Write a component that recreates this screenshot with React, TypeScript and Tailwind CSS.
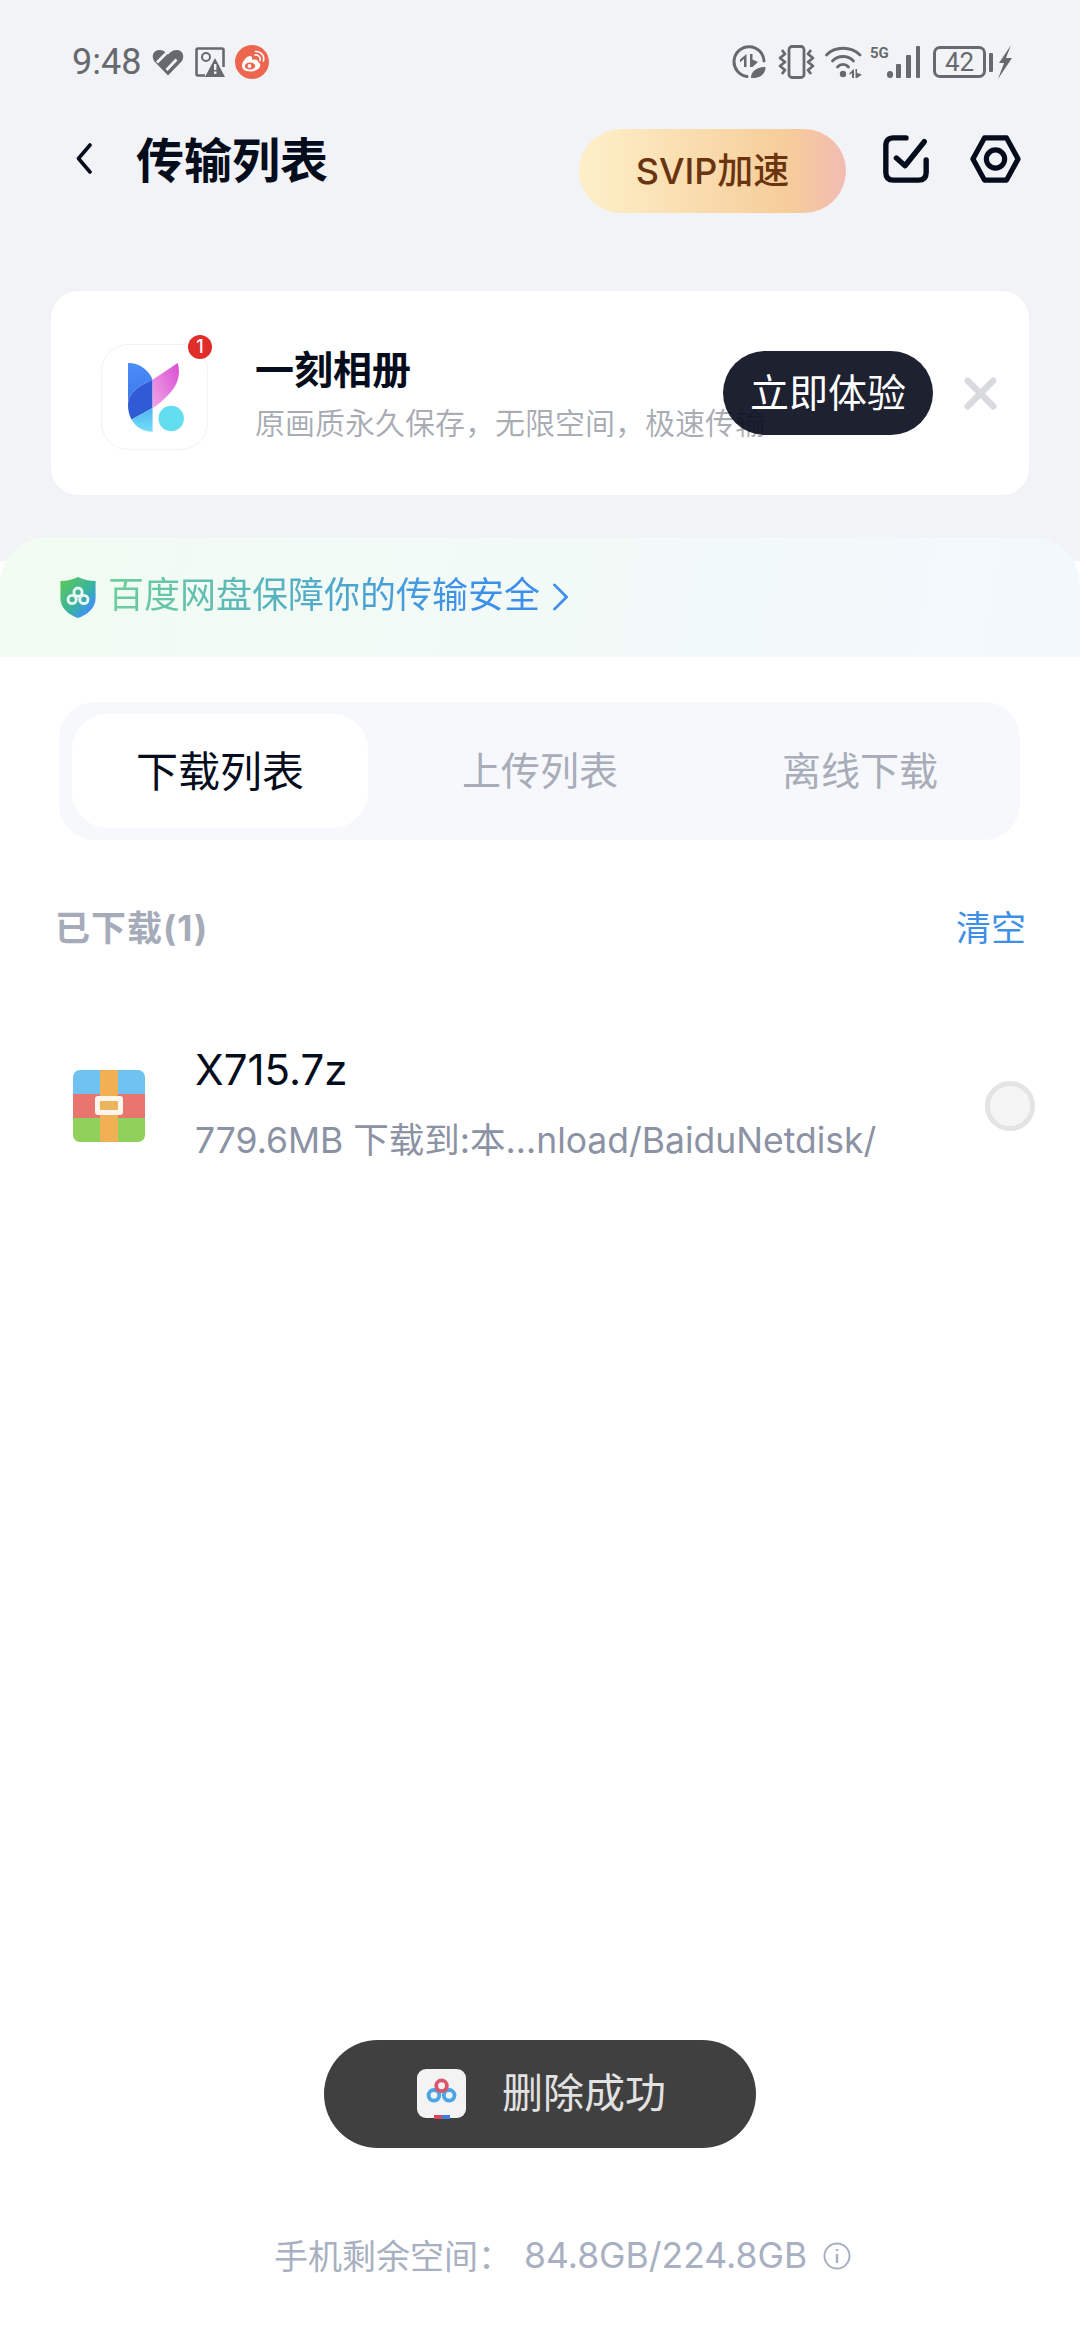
import React from 'react';

const IC = '#666a6e';

function HeartIcon() {
  return (
    <svg width="32" height="27" viewBox="0 0 32 27" fill={IC}>
      <path d="M16 26.5 L2.5 12.5 C-1 8 1 1 7.5 1 C11 1 13.5 3 16 5.5 C18.5 3 21 1 25 1 C31 1 33 8 29.5 12.5 Z" />
      <path d="M5 13.5 L16.5 2 M14.5 21 L24.5 10.5" stroke="#f2f3f7" strokeWidth="2.8" fill="none" />
    </svg>
  );
}

function PhotoAlertIcon() {
  return (
    <svg width="30" height="30" viewBox="0 0 30 30" fill="none">
      <path d="M10 28.5 H3 Q1.5 28.5 1.5 27 V3 Q1.5 1.5 3 1.5 H27 Q28.5 1.5 28.5 3 V20" stroke={IC} strokeWidth="2.6" />
      <circle cx="11" cy="10" r="4" stroke={IC} strokeWidth="2" />
      <path d="M20 11 L30 30 H10 Z" fill={IC} />
      <rect x="19" y="17" width="2.4" height="6" fill="#f2f3f7" />
      <rect x="19" y="24.5" width="2.4" height="2.4" fill="#f2f3f7" />
    </svg>
  );
}

function WeiboIcon() {
  return (
    <svg width="34" height="34" viewBox="0 0 34 34">
      <circle cx="17" cy="17" r="17" fill="#ec6650" />
      <path d="M7 21 C7 16 12 11 15 11 C17 11 17.5 13 17 15 C20 14 23 14.5 23 17 C26 18 26 22 23 24 C20 26.5 15 27 11.5 26 C8.5 25 7 23.5 7 21 Z" fill="#fff" />
      <ellipse cx="15" cy="21" rx="5.2" ry="3.6" fill="#ec6650" />
      <circle cx="14.5" cy="21" r="1.9" fill="#fff" />
      <path d="M20 10 C23 9.5 26 12 25 15.5 M20.5 6.5 C25.5 6 30 10.5 28.4 16" stroke="#fff" strokeWidth="1.6" fill="none" strokeLinecap="round" />
    </svg>
  );
}

function SaverIcon() {
  return (
    <svg width="34" height="34" viewBox="0 0 34 34" fill="none">
      <path d="M15 31.5 A15 15 0 1 1 32 16" stroke={IC} strokeWidth="3" strokeLinecap="round" />
      <path d="M14.5 9 V22 H12 V14 L8 17.5 V14.5 Z" fill={IC} />
      <path d="M18 9 V22 H20.5 L26 17 L20.5 14.5 V9 Z" fill={IC} />
      <path d="M19 33 C19 26 25 22 33.5 22 C33.5 29 28 33.5 19 33 Z" fill={IC} />
    </svg>
  );
}

function VibrateIcon() {
  return (
    <svg width="37" height="34" viewBox="0 0 37 34" fill="none">
      <rect x="11" y="1.5" width="15" height="31" rx="3" stroke={IC} strokeWidth="2.8" />
      <path d="M4 5 L7 9 L2 13 L7 17 L2 21 L7 25 L4 29" stroke={IC} strokeWidth="2.8" strokeLinejoin="round" />
      <path d="M33 5 L30 9 L35 13 L30 17 L35 21 L30 25 L33 29" stroke={IC} strokeWidth="2.8" strokeLinejoin="round" />
    </svg>
  );
}

function WifiIcon() {
  return (
    <svg width="37" height="34" viewBox="0 0 37 34" fill="none">
      <path d="M1.5 10 C10 1 26 1 35 10" stroke={IC} strokeWidth="2.8" strokeLinecap="round" />
      <path d="M7.5 16 C13 10 23 10 28.5 16" stroke={IC} strokeWidth="2.8" strokeLinecap="round" />
      <path d="M12.5 22 C15.5 18.5 20.5 18.5 23.5 22" stroke={IC} strokeWidth="2.8" strokeLinecap="round" />
      <circle cx="18" cy="29" r="3.2" fill={IC} />
      <path d="M29 24 V33 H27 V28 L24.5 30 V28 Z M30.5 24 V33 H32 L37 29.5 L32 28 V24 Z" fill={IC} />
    </svg>
  );
}

function SignalIcon() {
  return (
    <svg width="35" height="32" viewBox="0 0 35 32" fill={IC}>
      <rect x="0" y="25" width="6" height="7" rx="3" />
      <rect x="9" y="18" width="5" height="14" rx="1" />
      <rect x="19" y="9" width="5" height="23" rx="1" />
      <rect x="29" y="0" width="4" height="32" rx="1" />
    </svg>
  );
}

function BoltIcon() {
  return (
    <svg width="14" height="34" viewBox="0 0 14 34" fill={IC}>
      <path d="M13 0 L1 18 H6 L0 34 L14 13 H8 Z" />
    </svg>
  );
}

function LogoIcon() {
  return (
    <svg className="w-full h-full" viewBox="34 42 320 318">
      <defs>
        <linearGradient id="lb" x1="0" y1="0" x2="0" y2="1">
          <stop offset="0" stopColor="#4a8cf8" />
          <stop offset="1" stopColor="#3b78ec" />
        </linearGradient>
        <linearGradient id="lc" x1="0" y1="0" x2="0" y2="1">
          <stop offset="0" stopColor="#4fb4f0" />
          <stop offset="1" stopColor="#74dff8" />
        </linearGradient>
        <linearGradient id="lp" x1="1" y1="0" x2="0" y2="1">
          <stop offset="0" stopColor="#d94ed2" />
          <stop offset="1" stopColor="#f0a6e8" />
        </linearGradient>
      </defs>
      <path d="M113 97 C150 97 178 120 188 148 C150 165 113 185 113 225 Z" fill="url(#lb)" />
      <path d="M188 148 L188 235 L124 270 C116 258 113 240 113 225 C113 185 150 165 188 148 Z" fill="#2f5bd6" />
      <path d="M124 270 L188 235 L188 307 C160 307 137 295 124 270 Z" fill="url(#lc)" />
      <path d="M188 148 L265 97 C275 130 265 165 240 190 C222 210 205 225 188 235 Z" fill="url(#lp)" />
      <circle cx="245" cy="267" r="39" fill="#62def0" />
    </svg>
  );
}

function Trefoil({ stroke, top }: { stroke: string; top?: string }) {
  return (
    <g fill="none" stroke={stroke} strokeWidth="3">
      <circle cx="9" cy="16" r="4.2" />
      <circle cx="21" cy="16" r="4.2" />
      <circle cx="15" cy="8.5" r="4.2" stroke={top || stroke} />
    </g>
  );
}

function ShieldIcon() {
  return (
    <svg width="36" height="41" viewBox="0 0 36 42">
      <defs>
        <linearGradient id="sh" x1="0" y1="0" x2="1" y2="1">
          <stop offset="0" stopColor="#5fca56" />
          <stop offset="0.55" stopColor="#39b3a0" />
          <stop offset="0.8" stopColor="#3f95ef" />
          <stop offset="1" stopColor="#4ba8e8" />
        </linearGradient>
      </defs>
      <path d="M18 0 C24 3 29 4 36 4 V22 C36 32 27 39 18 42 C9 39 0 32 0 22 V4 C7 4 12 3 18 0 Z" fill="url(#sh)" />
      <g transform="translate(3 7)">
        <Trefoil stroke="#e8f6f4" />
      </g>
    </svg>
  );
}

function ArchiveIcon() {
  return (
    <svg width="72" height="72" viewBox="0 0 72 72">
      <defs>
        <clipPath id="ar">
          <rect width="72" height="72" rx="7" />
        </clipPath>
      </defs>
      <g clipPath="url(#ar)">
        <rect width="72" height="24" fill="#70c2f0" />
        <rect y="24" width="72" height="24" fill="#e8766f" />
        <rect y="48" width="72" height="24" fill="#8fd15a" />
        <rect x="27" width="18" height="72" fill="#f2b054" />
      </g>
      <rect x="22" y="26" width="28" height="19" rx="3" fill="#fdf6ec" />
      <rect x="27" y="31" width="18" height="9" rx="1" fill="#ecb45c" />
    </svg>
  );
}

function BaiduIcon() {
  return (
    <svg width="49" height="50" viewBox="0 0 49 50">
      <rect width="49" height="49" rx="9" fill="#f3f3f3" />
      <g transform="translate(5.5 6) scale(1.27)">
        <Trefoil stroke="#4aa5e6" top="#d9566c" />
      </g>
      <rect x="17" y="46" width="8" height="4" fill="#d9455f" />
      <rect x="25" y="46" width="8" height="4" fill="#3b7de0" />
    </svg>
  );
}

export default function App() {
  return (
    <div lang="zh-CN" className="relative w-[1080px] h-[2340px] flex flex-col bg-white overflow-hidden font-['Inter','Noto_Sans_CJK_SC',sans-serif]">
      {/* Top area */}
      <div className="bg-[#f2f3f7] pb-[42px]">
        <div className="flex items-center h-[36px] mt-[44px] pl-[72px] text-[#666a6e] font-['Roboto','Noto_Sans_CJK_SC',sans-serif]">
          <span className="text-[36px] leading-[36px]">9:48</span>
          <span className="ml-[11px]"><HeartIcon /></span>
          <span className="ml-[11px]"><PhotoAlertIcon /></span>
          <span className="ml-[10px]"><WeiboIcon /></span>
          <div className="flex items-center ml-auto pr-[68px]">
            <SaverIcon />
            <span className="ml-[12px]"><VibrateIcon /></span>
            <span className="ml-[10px]"><WifiIcon /></span>
            <span className="relative ml-[25px]">
              <SignalIcon />
              <span className="absolute left-[-17px] top-[-1px] text-[15px] leading-[16px] font-bold">5G</span>
            </span>
            <div className="ml-[11px] w-[53px] h-[32px] rounded-[7px] border-[3px] border-[#666a6e] flex items-center justify-center text-[26px] leading-none">42</div>
            <div className="ml-[3px] w-[4px] h-[19px] rounded-[1px] bg-[#666a6e]" />
            <span className="ml-[5px]"><BoltIcon /></span>
          </div>
        </div>

        <div className="flex items-start h-[84px] mt-[49px]">
          <svg className="ml-[76px] mt-[14px]" width="16" height="31" viewBox="0 0 16 31" fill="none">
            <path d="M14 2 L2.5 15.5 L14 29" stroke="#050c1c" strokeWidth="3.6" strokeLinecap="round" strokeLinejoin="round" />
          </svg>
          <h1 className="ml-[44px] mt-[7px] w-[192px] whitespace-nowrap text-[48px] leading-[50px] font-bold text-[#050c1c]">传输列表</h1>
          <div className="ml-[251px] w-[267px] h-[84px] rounded-full flex items-center justify-center bg-[linear-gradient(90deg,#fdeec6_5%,#f6cd9a_78%,#f2bbb2_100%)] text-[36px] font-medium text-[#6b3410]">SVIP加速</div>
          <svg className="ml-[36px] mt-[6px]" width="48" height="48" viewBox="0 0 48 50" fill="none">
            <path d="M24 3 H11 Q3 3 3 11 V39 Q3 47 11 47 H37 Q45 47 45 39 V26" stroke="#050c1c" strokeWidth="5.6" strokeLinecap="round" />
            <path d="M14 24 L23 32 L43 7" stroke="#050c1c" strokeWidth="5.6" strokeLinecap="round" strokeLinejoin="round" />
          </svg>
          <svg className="ml-[39px] mt-[6px]" width="53" height="48" viewBox="0 0 53 50" fill="none">
            <path d="M15 3 H38 L50 25 L38 47 H15 L3 25 Z" stroke="#050c1c" strokeWidth="5.4" strokeLinejoin="round" />
            <circle cx="26.5" cy="25" r="9.5" stroke="#050c1c" strokeWidth="5.4" />
          </svg>
        </div>

        {/* Promo card */}
        <div className="relative mt-[78px] ml-[51px] w-[978px] h-[204px] rounded-[27px] bg-white flex pt-[53px] pl-[50px]">
          <div className="relative w-[107px] h-[106px] shrink-0 rounded-[27px] border border-[#f2f2f4]">
            <LogoIcon />
            <div className="absolute right-[-5px] top-[-10px] w-[24px] h-[24px] rounded-full bg-[#e02d2a] flex items-center justify-center text-white text-[18px] leading-none font-medium">1</div>
          </div>
          <div className="relative z-10 ml-[47px] mt-[1px] h-[50px]">
            <div className="text-[39px] leading-[50px] font-bold text-[#050c1c]">一刻相册</div>
            <div className="mt-[7px] text-[30px] leading-[42px] whitespace-nowrap text-[#05102a]/35">原画质永久保存，无限空间，极速传输</div>
          </div>
          <div className="absolute right-[32px] top-[60px] flex items-center">
            <div className="w-[210px] h-[84px] rounded-full bg-[#1e2130] flex items-center justify-center text-white text-[39px]">立即体验</div>
            <svg className="ml-[31px]" width="33" height="33" viewBox="0 0 35 35" fill="none">
              <path d="M4 4 L31 31 M31 4 L4 31" stroke="#d9dade" strokeWidth="7" strokeLinecap="round" />
            </svg>
          </div>
        </div>
      </div>

      {/* Security banner, its corners sit half on grey */}
      <div className="bg-[linear-gradient(180deg,#f2f3f7_24px,#ffffff_24px)]">
        <div className="h-[120px] rounded-t-[48px] bg-[linear-gradient(100deg,#f1fcf2,#f3f8fd)] flex items-center pl-[60px]">
          <ShieldIcon />
          <span className="ml-[12px] mb-[4px] text-[36px] leading-[48px] bg-[linear-gradient(90deg,#6dcf9b,#3d8fea_85%)] bg-clip-text text-transparent">百度网盘保障你的传输安全</span>
          <svg className="ml-[12px]" width="18" height="28" viewBox="0 0 18 30" fill="none">
            <path d="M2 2 L15 15 L2 28" stroke="#3d8fea" strokeWidth="3" strokeLinecap="round" strokeLinejoin="round" />
          </svg>
        </div>
      </div>

      {/* Tabs */}
      <div className="mt-[45px] ml-[59px] w-[961px] h-[138px] rounded-[36px] bg-[#f7f8fc] flex p-[12px] pl-[13px] text-[39px]">
        <div className="w-[296px] rounded-[36px] bg-white flex items-center justify-center text-[42px] text-[#050c1c]">下载列表</div>
        <div className="flex-1 flex items-center justify-center text-[#a8adb9]">上传列表</div>
        <div className="w-[296px] flex items-center justify-center text-[#a8adb9]">离线下载</div>
      </div>

      {/* List */}
      <div className="mt-[65px] flex justify-between items-center h-[46px] pl-[55px] pr-[54px] text-[35px]">
        <span className="font-bold tracking-[1px] text-[#a5abb8]">已下载(1)</span>
        <span className="text-[#3f8fe6]">清空</span>
      </div>
      <div className="mt-[96px] flex items-center">
        <div className="ml-[73px] shrink-0 mt-[1px]"><ArchiveIcon /></div>
        <div className="ml-[50px]">
          <div className="text-[42px] leading-[46px] text-[#050c1c]">X715.7z</div>
          <div className="mt-[25px] text-[35.5px] leading-[46px] text-[#8b92a3] whitespace-nowrap">779.6MB 下载到:本…nload/BaiduNetdisk/</div>
        </div>
        <div className="ml-auto mr-[45px] w-[50px] h-[50px] rounded-full bg-[#f5f5f5] border-[5px] border-[#e4e4e4]" />
      </div>

      {/* Footer */}
      <div className="mt-auto mb-[61px] ml-[274px] h-[46px] flex items-center text-[34px] text-[#a8b0c1]">
        <span>手机剩余空间：</span>
        <span className="ml-[12px] text-[35.5px]">84.8GB/224.8GB</span>
        <svg className="ml-[16px]" width="28" height="28" viewBox="0 0 28 28" fill="none">
          <circle cx="14" cy="14" r="12.5" stroke="#a8b0c1" strokeWidth="2" />
          <path d="M14 12 V21 M14 7 V9" stroke="#a8b0c1" strokeWidth="2.4" />
        </svg>
      </div>

      {/* Toast */}
      <div className="absolute left-[324px] top-[2040px] w-[432px] h-[108px] rounded-full bg-[#404040] flex items-center pl-[93px]">
        <BaiduIcon />
        <span className="ml-[36px] text-[41px] text-[#e2e2e2]">删除成功</span>
      </div>
    </div>
  );
}
